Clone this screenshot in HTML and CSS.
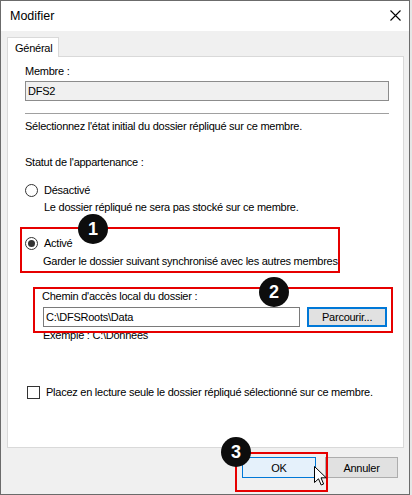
FILE: index.html
```html
<!DOCTYPE html>
<html lang="fr">
<head>
  <meta charset="UTF-8">
  <title>Modifier</title>
  <link rel="stylesheet" href="styles.css">
</head>
<body>
  <div class="window">
    <div class="titlebar">
      <span class="title">Modifier</span>
      <svg class="close" width="11" height="11" viewBox="0 0 11 11"><path d="M0.5 0.5 L10.5 10.5 M10.5 0.5 L0.5 10.5" stroke="#000" stroke-width="1.1" fill="none"/></svg>
    </div>

    <div class="content">
      <div class="tabs">
        <div class="tab">Général</div>
      </div>

      <div class="panel">
        <div class="line">Membre :</div>
        <div class="field readonly">DFS2</div>
        <div class="separator"></div>
        <div class="line gap-s">Sélectionnez l'état initial du dossier répliqué sur ce membre.</div>
        <div class="line gap-l">Statut de l'appartenance :</div>

        <div class="option gap-m">
          <span class="radio"></span>
          <span>Désactivé</span>
        </div>
        <div class="line indent desc">Le dossier répliqué ne sera pas stocké sur ce membre.</div>

        <!-- annotation 1 -->
        <div class="mark mark-active">
          <div class="option">
            <span class="radio checked"></span>
            <span>Activé</span>
          </div>
          <div class="line indent desc-tight">Garder le dossier suivant synchronisé avec les autres membres</div>
          <span class="badge badge-1">1</span>
        </div>

        <!-- annotation 2 -->
        <div class="mark mark-path">
          <div class="path-label">Chemin d'accès local du dossier :</div>
          <div class="path-row">
            <div class="field path">C:\DFSRoots\Data</div>
            <button class="btn focused">Parcourir...</button>
          </div>
          <span class="badge badge-2">2</span>
        </div>
        <div class="line example">Exemple : C:\Données</div>

        <div class="option check-row">
          <span class="checkbox"></span>
          <span>Placez en lecture seule le dossier répliqué sélectionné sur ce membre.</span>
        </div>
      </div>

      <div class="actions">
        <!-- annotation 3 -->
        <div class="mark mark-ok">
          <button class="btn default">OK</button>
          <span class="badge badge-3">3</span>
          <svg class="cursor" width="13" height="20" viewBox="0 0 13 20"><path d="M0.5 0.5 L0.5 16.5 L4.5 12.8 L7.2 19 L9.6 18 L7 11.8 L12.2 11.8 Z" fill="#fff" stroke="#000" stroke-width="1" stroke-linejoin="miter"/></svg>
        </div>
        <button class="btn cancel">Annuler</button>
      </div>
    </div>
  </div>
</body>
</html>
```

FILE: styles.css
```css
body {
  margin: 0;
  padding: 0;
  background: #e6e6e6;
  font-family: 'Liberation Sans', Arial, sans-serif;
  font-size: 11px;
  letter-spacing: -0.25px;
  color: #000;
}

.window {
  width: 410px;
  height: 495px;
  box-sizing: border-box;
  border: 1px solid #6b6b6b;
  background: #f0f0f0;
}

.titlebar {
  height: 30px;
  background: #fff;
  display: flex;
  align-items: center;
  justify-content: space-between;
  padding: 0 8px 0 9px;
}

.title {
  font-size: 12.5px;
  letter-spacing: 0;
  padding-bottom: 1px;
}

.close {
  margin-bottom: 1px;
}

.content {
  padding: 6px 5px 0 6px;
}

.tabs {
  display: flex;
}

.tab {
  width: 52px;
  height: 20px;
  box-sizing: border-box;
  border: 1px solid #d9d9d9;
  border-bottom: none;
  background: #fff;
  padding: 3px 0 0 7px;
  line-height: 15px;
  margin-bottom: -1px;
  position: relative;
  z-index: 1;
}

.panel {
  height: 392px;
  box-sizing: border-box;
  border: 1px solid #d9d9d9;
  background: #fff;
  padding: 7px 14px 0 17px;
}

.line {
  line-height: 15px;
  white-space: nowrap;
}

.gap-s {
  margin-top: 5px;
}

.gap-l {
  margin-top: 21px;
}

.gap-m {
  margin-top: 13px;
}

.indent {
  padding-left: 19px;
}

.desc {
  margin-top: 2px;
}

.desc-tight {
  margin-top: 3px;
  padding-left: 18px;
}

.field {
  height: 20px;
  box-sizing: border-box;
  border: 1px solid #7a7a7a;
  padding-left: 2px;
  line-height: 18px;
  background: #fff;
}

.field.readonly {
  margin-top: 2px;
  background: #f0f0f0;
  border-color: #8c8c8c;
}

.separator {
  margin-top: 12px;
  height: 1px;
  background: #a0a0a0;
}

.option {
  display: flex;
  align-items: center;
  line-height: 15px;
  white-space: nowrap;
}

.radio {
  width: 13px;
  height: 13px;
  box-sizing: border-box;
  border: 1px solid #333;
  border-radius: 50%;
  background: #fff;
  margin-right: 6px;
  display: flex;
  align-items: center;
  justify-content: center;
}

.radio.checked::after {
  content: '';
  width: 7px;
  height: 7px;
  border-radius: 50%;
  background: #333;
}

.checkbox {
  width: 13px;
  height: 13px;
  box-sizing: border-box;
  border: 1px solid #333;
  background: #fff;
  margin: 0 6px 0 1px;
}

.mark {
  position: relative;
  z-index: 2;
  border: 2px solid #e60000;
}

.mark-active {
  width: 320px;
  box-sizing: border-box;
  margin: 12px 0 0 -5px;
  padding: 7px 0 2px 3px;
}

.mark-path {
  width: 360px;
  box-sizing: border-box;
  margin: 14px 0 0 8px;
  padding: 0 4px 4px 7px;
}

.path-label {
  line-height: 14px;
}

.path-row {
  display: flex;
  gap: 7px;
  margin-top: 4px;
  margin-left: 1px;
}

.field.path {
  width: 258px;
}

.example {
  margin: -5px 0 0 18px;
}

.check-row {
  margin: 42px 0 0 1px;
}

.btn {
  font-family: inherit;
  font-size: 11px;
  letter-spacing: -0.25px;
  color: #000;
  height: 21px;
  box-sizing: border-box;
  padding: 0;
  border: 1px solid #adadad;
  background: #e1e1e1;
}

.btn.focused {
  width: 80px;
  height: 20px;
  border: 2px solid #0078d7;
}

.btn.default {
  width: 74px;
  border-color: #0078d7;
  background: #e5f1fb;
}

.btn.cancel {
  width: 73px;
  margin: 5px 0 0 -3px;
}

.actions {
  display: flex;
  justify-content: flex-end;
  align-items: flex-start;
  margin-top: 4px;
  padding-right: 6px;
}

.mark-ok {
  padding: 3px 10px 12px 5px;
}

.badge {
  position: absolute;
  width: 30px;
  height: 30px;
  border-radius: 50%;
  background: #0d0d0d;
  color: #fff;
  font-size: 18px;
  font-weight: bold;
  letter-spacing: 0;
  line-height: 30px;
  text-align: center;
}

.badge-1 {
  left: 56px;
  top: -15px;
}

.badge-2 {
  left: 224px;
  top: -12px;
}

.badge-3 {
  left: -16px;
  top: -17px;
}

.cursor {
  position: absolute;
  left: 77px;
  top: 12px;
}
```
